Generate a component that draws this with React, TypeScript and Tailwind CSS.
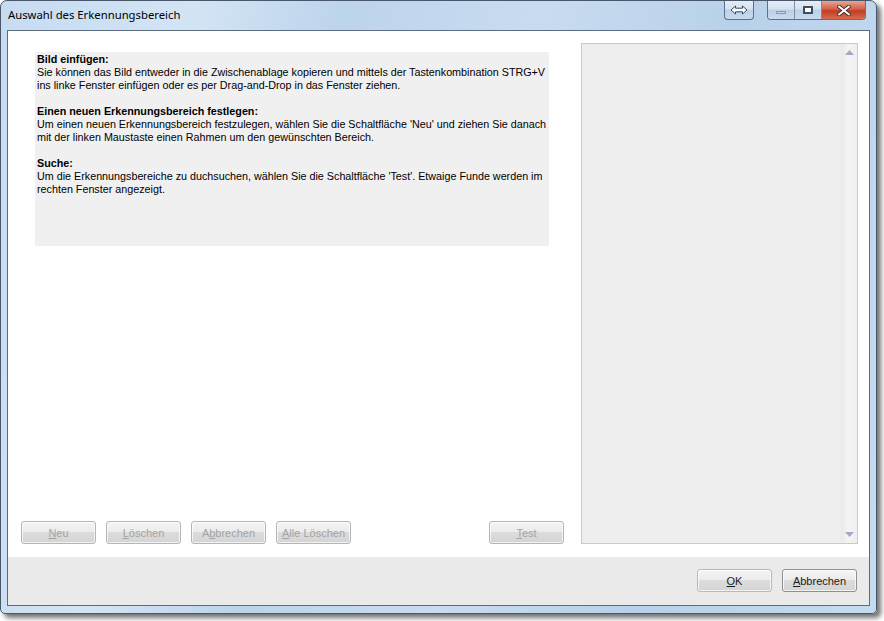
import React from "react";

const F = { fontFamily: '"Liberation Sans", Arial, sans-serif' };

function Btn({ pre = "", u, rest, disabled = true, def = false }: { pre?: string; u: string; rest: string; disabled?: boolean; def?: boolean }) {
  const border = def ? "border-[#dcb865]" : disabled ? "border-[#b5b5b5]" : "border-[#8e8f8f]";
  const color = disabled ? "text-[#a3a3a3]" : "text-[#1b1b1b]";
  return (
    <div
      className={`w-[75px] h-[23px] rounded-[3px] border ${border} ${color} flex items-center justify-center text-[11px] leading-none pt-[1px] bg-[linear-gradient(to_bottom,#f4f4f4_0%,#ececec_45%,#dcdcdc_50%,#d4d4d4_100%)] shadow-[inset_0_0_0_1px_rgba(255,255,255,0.7)]`}
      style={F}
    >
      <span>
        {pre}
        <span className="underline underline-offset-[1px]">{u}</span>
        {rest}
      </span>
    </div>
  );
}

const glass = "bg-[linear-gradient(to_bottom,#e4edf7_0%,#d4e2f1_45%,#bcd0e6_50%,#c8dbef_100%)]";

export default function App() {
  return (
    <div className="w-[884px] h-[621px] bg-white relative overflow-hidden">
      <div className="w-[877px] h-[614px] rounded-t-[7px] rounded-b-[5px] border border-[#48576a] bg-[linear-gradient(100deg,#c6dcf1_0%,#d3e4f5_20%,#bcd4ec_35%,#c8dcf0_55%,#b8d1ea_75%,#c5dbf0_100%)] shadow-[4px_4px_5px_rgba(0,0,0,0.55)] flex flex-col">
        {/* title bar */}
        <div className="h-[29px] flex items-start relative">
          <div className="pl-[7px] pt-[7px] text-[11.3px] leading-[14px] text-black" style={{ fontFamily: '"Noto Sans", "Open Sans", sans-serif' }}>
            Auswahl des Erkennungsbereich
          </div>
          <div className="ml-auto flex items-start">
            <div className={`w-[30px] h-[19px] rounded-b-[4px] border border-t-0 border-[#5f6f84] ${glass} flex items-center justify-center`}>
              <svg width="18" height="10" viewBox="0 0 18 10">
                <path d="M1 5 L5.5 1 L5.5 3.2 L12.5 3.2 L12.5 1 L17 5 L12.5 9 L12.5 6.8 L5.5 6.8 L5.5 9 Z" fill="#ffffff" stroke="#3b4a5e" strokeWidth="1" strokeLinejoin="round" />
              </svg>
            </div>
            <div className="ml-[13px] mr-[10px] h-[19px] flex rounded-b-[4px] border border-t-0 border-[#5f6f84] overflow-hidden">
              <div className={`w-[27px] h-full ${glass} border-r border-[#7d8ea4] flex items-center justify-center`}>
                <div className="w-[10px] h-[3px] bg-[#c8d4e0] border border-[#8c9ab0] mt-[5px]" />
              </div>
              <div className={`w-[27px] h-full ${glass} border-r border-[#7d8ea4] flex items-center justify-center`}>
                <div className="w-[10px] h-[8px] border-[2px] border-[#3f4d60] bg-white" />
              </div>
              <div className="w-[43px] h-full bg-[linear-gradient(to_bottom,#e7a596_0%,#d2604a_45%,#c13d24_55%,#d76a4e_100%)] flex items-center justify-center">
                <svg width="14" height="11" viewBox="0 0 14 11">
                  <path d="M2 1.5 L12 9.5 M12 1.5 L2 9.5" stroke="#3a2a2a" strokeWidth="3.6" strokeLinecap="round" />
                  <path d="M2 1.5 L12 9.5 M12 1.5 L2 9.5" stroke="#ffffff" strokeWidth="2" strokeLinecap="round" />
                </svg>
              </div>
            </div>
          </div>
        </div>
        {/* client */}
        <div className="mx-[6px] mb-[7px] flex-1 border border-[#5c6b7d] flex flex-col bg-white">
          <div className="h-[526px] flex pt-[12px] pl-[13px] pr-[10px] bg-white">
            <div className="w-[543px] h-[501px] flex flex-col">
              <div className="ml-[14px] mt-[9px] w-[514px] h-[194px] bg-[#f0f0f0] px-[2px] pt-[1px] text-[10.75px] leading-[13px] text-black whitespace-nowrap" style={F}>
                <div className="font-bold">Bild einfügen:</div>
                <div>Sie können das Bild entweder in die Zwischenablage kopieren und mittels der Tastenkombination STRG+V</div>
                <div>ins linke Fenster einfügen oder es per Drag-and-Drop in das Fenster ziehen.</div>
                <div className="h-[13px]" />
                <div className="font-bold">Einen neuen Erkennungsbereich festlegen:</div>
                <div>Um einen neuen Erkennungsbereich festzulegen, wählen Sie die Schaltfläche 'Neu' und ziehen Sie danach</div>
                <div>mit der linken Maustaste einen Rahmen um den gewünschten Bereich.</div>
                <div className="h-[13px]" />
                <div className="font-bold">Suche:</div>
                <div>Um die Erkennungsbereiche zu duchsuchen, wählen Sie die Schaltfläche 'Test'. Etwaige Funde werden im</div>
                <div>rechten Fenster angezeigt.</div>
              </div>
              <div className="mt-auto flex gap-[10px]">
                <Btn u="N" rest="eu" />
                <Btn u="L" rest="öschen" />
                <Btn pre="A" u="b" rest="brechen" />
                <Btn u="A" rest="lle Löschen" />
                <div className="ml-auto">
                  <Btn u="T" rest="est" />
                </div>
              </div>
            </div>
            <div className="ml-[17px] w-[277px] h-[501px] border border-[#c9c9c9] bg-[#eeeeee] flex justify-end">
              <div className="w-[16px] h-full bg-[linear-gradient(to_right,#e8e8e8,#f4f4f4_40%,#efefef)] flex flex-col items-center justify-between py-[6px]">
                <svg width="9" height="5" viewBox="0 0 9 5"><path d="M4.5 0 L9 5 L0 5 Z" fill="#a0aac8" /></svg>
                <svg width="9" height="5" viewBox="0 0 9 5"><path d="M0 0 L9 0 L4.5 5 Z" fill="#a0aac8" /></svg>
              </div>
            </div>
          </div>
          <div className="flex-1 bg-[#eaeaea] flex justify-end items-start pt-[12px] pr-[12px] gap-[10px]">
            <Btn u="O" rest="K" disabled={false} def />
            <Btn u="A" rest="bbrechen" disabled={false} />
          </div>
        </div>
      </div>
    </div>
  );
}
